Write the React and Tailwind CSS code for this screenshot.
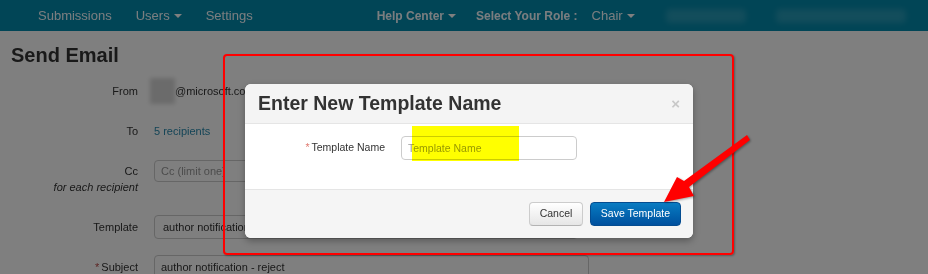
import React from 'react';

const Caret = ({ color = 'border-t-white' }) => (
  <span className={`inline-block w-0 h-0 ml-[4px] align-middle border-x-[4px] border-t-[4px] border-x-transparent ${color}`} />
);

const navLeft = [
  { label: 'Submissions' },
  { label: 'Users', caret: true },
  { label: 'Settings' },
];

const NavBar = () => (
  <div className="h-[31px] bg-[#028aac] flex items-center text-[#f4fbff] text-[13px]">
    <div className="flex items-center gap-[24px] pl-[38px]">
      {navLeft.map(item => (
        <span key={item.label} className="whitespace-nowrap">
          {item.label}
          {item.caret && <Caret />}
        </span>
      ))}
    </div>
    <div className="flex items-center ml-[124px] text-[12px] font-bold">
      <span className="whitespace-nowrap">Help Center<Caret /></span>
      <span className="ml-[20px] whitespace-nowrap">Select Your Role :</span>
      <span className="ml-[14px] text-[13px] font-normal whitespace-nowrap">Chair<Caret /></span>
      {/* blurred user info */}
      <span className="ml-[31px] w-[80px] h-[14px] rounded bg-white/15 blur-[3px]" />
      <span className="ml-[30px] w-[130px] h-[14px] rounded bg-white/15 blur-[3px]" />
    </div>
  </div>
);

const Row = ({ label, required, children, className = '' }) => (
  <div className={`flex items-center ${className}`}>
    <div className="w-[127px] text-right text-[#333] shrink-0">
      {required && <span className="text-[#b94a48] mr-[2px]">*</span>}
      {label}
    </div>
    <div className="ml-[16px] flex items-center">{children}</div>
  </div>
);

const SendEmailPage = () => (
  <div className="px-[11px] text-[11px]">
    <h1 className="pt-[12px] text-[20px] leading-6 font-bold text-[#333]">Send Email</h1>

    <Row label="From" className="mt-[11px] h-[26px]">
      <span className="-ml-[4px] w-[25px] h-[26px] bg-[#d6d6d6] blur-[2px]" />
      <span className="text-[#333]">@microsoft.com</span>
    </Row>

    <Row label="To" className="mt-[14px] h-[26px]">
      <a className="text-[#2a8aae] text-[11px]">5 recipients</a>
    </Row>

    <div className="flex items-start mt-[16px]">
      <div className="w-[127px] text-right text-[#333] shrink-0 pt-[3px] leading-4">
        <div>Cc</div>
        <div className="italic">for each recipient</div>
      </div>
      <input
        placeholder="Cc (limit one)"
        className="ml-[16px] w-[300px] h-[22px] px-[6px] border border-[#ccc] rounded-[4px] bg-white text-[11px] placeholder:text-[#999] outline-none"
      />
    </div>

    <Row label="Template" className="mt-[20px]">
      <div className="w-[424px] h-[24px] pl-[8px] flex items-center border border-[#ccc] rounded-[4px] bg-white text-[#333]">
        author notification - reject
      </div>
    </Row>

    <Row label="Subject" required className="mt-[16px]">
      <input
        defaultValue="author notification - reject"
        className="w-[435px] h-[24px] px-[6px] border border-[#ccc] rounded-[4px] bg-white text-[11px] text-[#333] outline-none"
      />
    </Row>
  </div>
);

const TemplateModal = () => (
  <div className="absolute left-[245px] top-[84px] w-[448px] rounded-[6px] bg-white shadow-[0_3px_7px_rgba(0,0,0,0.3)] overflow-hidden">
    <div className="relative h-[40px] flex items-center px-[13px] bg-[#f4f4f4] border-b border-[#e5e5e5]">
      <h3 className="text-[19.5px] font-bold text-[#333] leading-none">Enter New Template Name</h3>
      <span className="absolute right-[13px] top-[9px] text-[15px] font-bold text-[#c8c8c8]">×</span>
    </div>

    <div className="relative flex items-center pt-[12px] pb-[29px]">
      <label className="w-[140px] text-right text-[10.5px] text-[#333] shrink-0">
        <span className="text-[#e07a70] mr-[2px]">*</span>Template Name
      </label>
      <input
        placeholder="Template Name"
        className="ml-[16px] w-[176px] h-[24px] px-[6px] border border-[#ccc] rounded-[4px] bg-white text-[10.5px] placeholder:text-[#999] outline-none"
      />
      {/* highlighter mark */}
      <span className="absolute left-[167px] top-[2px] w-[107px] h-[35px] bg-[#ffff00] mix-blend-multiply" />
    </div>

    <div className="flex justify-end gap-[7px] pt-[12px] pb-[12px] pr-[12px] bg-[#f5f5f5] border-t border-[#e5e5e5]">
      <button className="w-[54px] h-[24px] text-[10.5px] text-[#333] rounded-[4px] border border-[#ccc] border-b-[#b3b3b3] bg-gradient-to-b from-white to-[#e6e6e6] shadow-[inset_0_1px_0_rgba(255,255,255,0.2)]">
        Cancel
      </button>
      <button className="w-[91px] h-[24px] text-[10.5px] text-white rounded-[4px] border border-[#044c90] bg-gradient-to-b from-[#0a7cc2] to-[#00509e]">
        Save Template
      </button>
    </div>
  </div>
);

export default function App() {
  return (
    <div className="relative w-[928px] h-[274px] overflow-hidden bg-white font-['Liberation_Sans',Arial,sans-serif]">
      <NavBar />
      <SendEmailPage />

      {/* modal backdrop */}
      <div className="absolute inset-0 bg-black/50" />

      {/* annotation box */}
      <div className="absolute left-[223px] top-[54px] w-[511px] h-[201px] border-2 border-[#ff0000] rounded-[4px] shadow-[1px_1px_2px_rgba(0,0,0,0.3)]" />

      <TemplateModal />

      {/* annotation arrow */}
      <svg className="absolute left-[660px] top-[130px] drop-shadow-[1px_1px_1px_rgba(0,0,0,0.35)]" width="95" height="80" viewBox="0 0 95 80">
        <polygon points="87,5 90,10 29,57 34,66 4,72 17,47 24,51" fill="#ff0000" />
      </svg>
    </div>
  );
}
